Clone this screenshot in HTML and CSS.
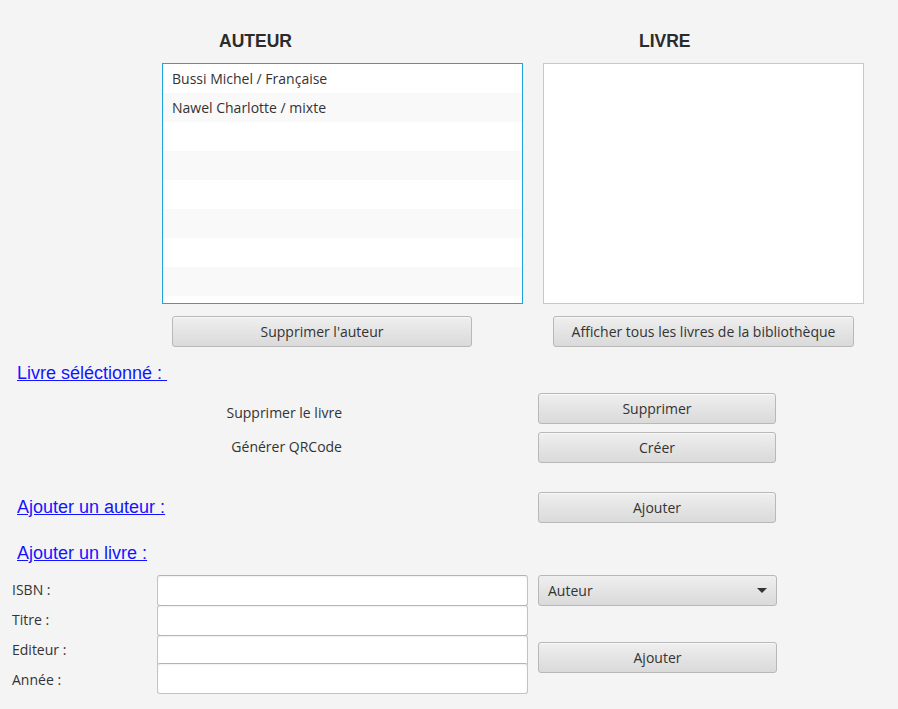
FILE: index.html
```html
<!DOCTYPE html>
<html lang="fr">
<head>
<meta charset="utf-8">
<title>Bibliothèque</title>
<link rel="stylesheet" href="styles.css">
</head>
<body>
<div class="app">
  <div class="lists">
    <div class="col col-a">
      <h2 class="col-title">AUTEUR</h2>
      <div class="listview focused">
        <div class="row">Bussi Michel / Française</div>
        <div class="row">Nawel Charlotte / mixte</div>
        <div class="row"></div>
        <div class="row"></div>
        <div class="row"></div>
        <div class="row"></div>
        <div class="row"></div>
        <div class="row"></div>
        <div class="row"></div>
      </div>
      <button class="btn btn-list">Supprimer l'auteur</button>
    </div>
    <div class="col col-b">
      <h2 class="col-title">LIVRE</h2>
      <div class="listview"></div>
      <button class="btn btn-list">Afficher tous les livres de la bibliothèque</button>
    </div>
  </div>

  <a class="section-link first-link" href="#">Livre séléctionné : </a>
  <div class="action-row row-1">
    <span class="action-label lbl-1">Supprimer le livre</span>
    <button class="btn btn-action">Supprimer</button>
  </div>
  <div class="action-row row-2">
    <span class="action-label lbl-2">Générer QRCode</span>
    <button class="btn btn-action">Créer</button>
  </div>

  <div class="author-row">
    <a class="section-link" href="#">Ajouter un auteur :</a>
    <button class="btn btn-action">Ajouter</button>
  </div>

  <a class="section-link book-link" href="#">Ajouter un livre :</a>
  <div class="book-form">
    <div class="fields">
      <label class="field-label">ISBN :</label>
      <input class="field" type="text">
      <label class="field-label">Titre :</label>
      <input class="field" type="text">
      <label class="field-label">Editeur :</label>
      <input class="field" type="text">
      <label class="field-label">Année :</label>
      <input class="field field-last" type="text">
    </div>
    <div class="form-side">
      <div class="combo">
        <span>Auteur</span>
        <svg class="arrow" width="10" height="5" viewBox="0 0 10 5"><path d="M0 0H10L5 5Z" fill="#333"/></svg>
      </div>
      <button class="btn btn-action btn-add-book">Ajouter</button>
    </div>
  </div>
</div>
</body>
</html>
```
FILE: styles.css
```css
html, body {
  margin: 0;
  padding: 0;
  background: #f4f4f4;
}
body {
  width: 898px;
  height: 709px;
  overflow: hidden;
  font-family: "Open Sans", "Noto Sans", sans-serif;
  font-size: 14px;
  color: #333333;
}
.app {
  padding-top: 31px;
}
.lists {
  display: flex;
  gap: 20px;
  padding-left: 162px;
}
.col-a { width: 361px; }
.col-b { width: 321px; }
.col-title {
  margin: 0 0 12px;
  height: 20px;
  line-height: 20px;
  font-family: "Liberation Sans", Arial, sans-serif;
  font-weight: bold;
  font-size: 17.5px;
  color: #2b2b2b;
}
.col-a .col-title { padding-left: 57px; }
.col-b .col-title { padding-left: 96px; }
.listview {
  box-sizing: border-box;
  height: 241px;
  background: #ffffff;
  border: 1px solid #c8c8c8;
  overflow: hidden;
}
.listview.focused {
  border-color: #1ea6dc;
}
.row {
  height: 29px;
  line-height: 29px;
  padding-left: 9px;
  white-space: nowrap;
}
.row:nth-child(even) {
  background: #f9f9f9;
}
.btn {
  box-sizing: border-box;
  height: 31px;
  padding: 0;
  border: 1px solid #b8b8b8;
  border-radius: 3px;
  background: linear-gradient(to bottom, #efefef 0%, #e2e2e2 60%, #dadada 100%);
  box-shadow: inset 0 1px 0 rgba(255,255,255,0.6);
  font-family: "Open Sans", "Noto Sans", sans-serif;
  font-size: 14px;
  line-height: 20px;
  color: #333333;
  display: flex;
  align-items: center;
  justify-content: center;
}
.btn-list {
  margin: 12px 0 0 10px;
  width: 300px;
}
.col-b .btn-list { width: 301px; }
.section-link {
  display: block;
  width: max-content;
  margin-left: 17px;
  height: 21px;
  line-height: 21px;
  font-family: "Liberation Sans", Arial, sans-serif;
  font-size: 18px;
  color: #1414ff;
  text-decoration: underline;
  white-space: pre;
}
.first-link {
  margin-top: 16px;
}
.action-row {
  display: flex;
  height: 31px;
}
.row-1 { margin-top: 9px; }
.row-2 { margin-top: 8px; }
.action-label {
  width: 342px;
  margin-right: 196px;
  text-align: right;
  line-height: 20px;
}
.lbl-1 { padding-top: 10px; }
.lbl-2 { padding-top: 5px; }
.btn-action {
  width: 238px;
}
.author-row {
  display: flex;
  align-items: center;
  justify-content: space-between;
  width: 776px;
  margin-top: 29px;
}
.author-row .section-link {
  margin-left: 17px;
}
.book-link {
  margin-top: 20px;
}
.book-form {
  display: flex;
  margin-top: 11px;
}
.fields {
  display: grid;
  grid-template-columns: 145px 371px;
  grid-auto-rows: 30px;
  padding-left: 12px;
  width: 516px;
}
.field-label {
  line-height: 30px;
  white-space: nowrap;
}
.field {
  box-sizing: border-box;
  height: 31px;
  margin: 0;
  border: 1px solid #c3c3c3;
  border-top-color: #b4b4b4;
  border-radius: 3px;
  background: #ffffff;
  box-shadow: inset 0 1px 2px rgba(0,0,0,0.06);
  outline: none;
}
.field-last {
  margin-top: -2px;
}
.form-side {
  margin-left: 10px;
  display: flex;
  flex-direction: column;
}
.combo {
  box-sizing: border-box;
  width: 239px;
  height: 31px;
  border: 1px solid #b8b8b8;
  border-radius: 3px;
  background: linear-gradient(to bottom, #efefef 0%, #e2e2e2 60%, #dadada 100%);
  display: flex;
  align-items: center;
  justify-content: space-between;
  padding: 0 9px 0 9px;
  line-height: 20px;
}
.arrow {
  display: block;
}
.btn-add-book {
  width: 239px;
  margin-top: 36px;
}
```
